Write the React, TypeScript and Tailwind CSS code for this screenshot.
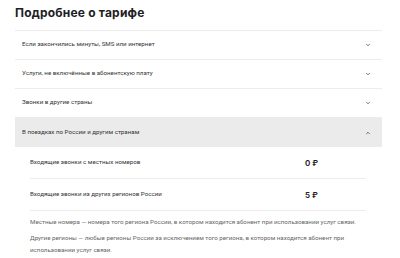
import { ChevronDown, ChevronUp } from 'lucide-react';

const rows = [
  'Если закончились минуты, SMS или интернет',
  'Услуги, не включённые в абонентскую плату',
  'Звонки в другие страны',
];

const prices = [
  { label: 'Входящие звонки с местных номеров', value: '0 ₽' },
  { label: 'Входящие звонки из других регионов России', value: '5 ₽' },
];

export default function App() {
  return (
    <div className="w-[400px] h-[258px] bg-white overflow-hidden px-[15px] pt-[4px] text-[#1d2023] font-['Roboto',sans-serif]">
      <h2 className="font-['Inter',sans-serif] text-[12px] font-bold leading-[18px] mb-[8px] tracking-[0.2px]">Подробнее о тарифе</h2>
      <div className="w-[367px] border-t border-[#ececec]">
        {rows.map((r) => (
          <div key={r} className="h-[29px] flex items-center justify-between pl-[7px] pr-[11px] border-b border-[#ececec]">
            <span className="text-[6.2px] text-[#333]">{r}</span>
            <ChevronDown className="w-[6px] h-[6px] text-[#444]" strokeWidth={3} />
          </div>
        ))}
        <div className="h-[29px] flex items-center justify-between pl-[7px] pr-[11px] bg-[#ebebeb]">
          <span className="text-[6.2px] text-[#333]">В поездках по России и другим странам</span>
          <ChevronUp className="w-[6px] h-[6px] text-[#444]" strokeWidth={3} />
        </div>
        <div className="pl-[15px] pr-[16px]">
          {prices.map((p) => (
            <div key={p.label} className="h-[32px] flex items-center border-b border-[#ececec]">
              <span className="text-[6.2px] text-[#333] w-[275px]">{p.label}</span>
              <span className="font-['Inter',sans-serif] text-[8px] font-semibold text-[#1d2023]">{p.value}</span>
            </div>
          ))}
          <div className="pt-[5px] text-[6.2px] leading-[12px] text-[#666] flex flex-col gap-[4px]">
            <p>Местные номера — номера того региона России, в котором находится абонент при использовании услуг связи.</p>
            <p>Другие регионы — любые регионы России за исключением того региона, в котором находится абонент при использовании услуг связи.</p>
          </div>
        </div>
      </div>
    </div>
  );
}
